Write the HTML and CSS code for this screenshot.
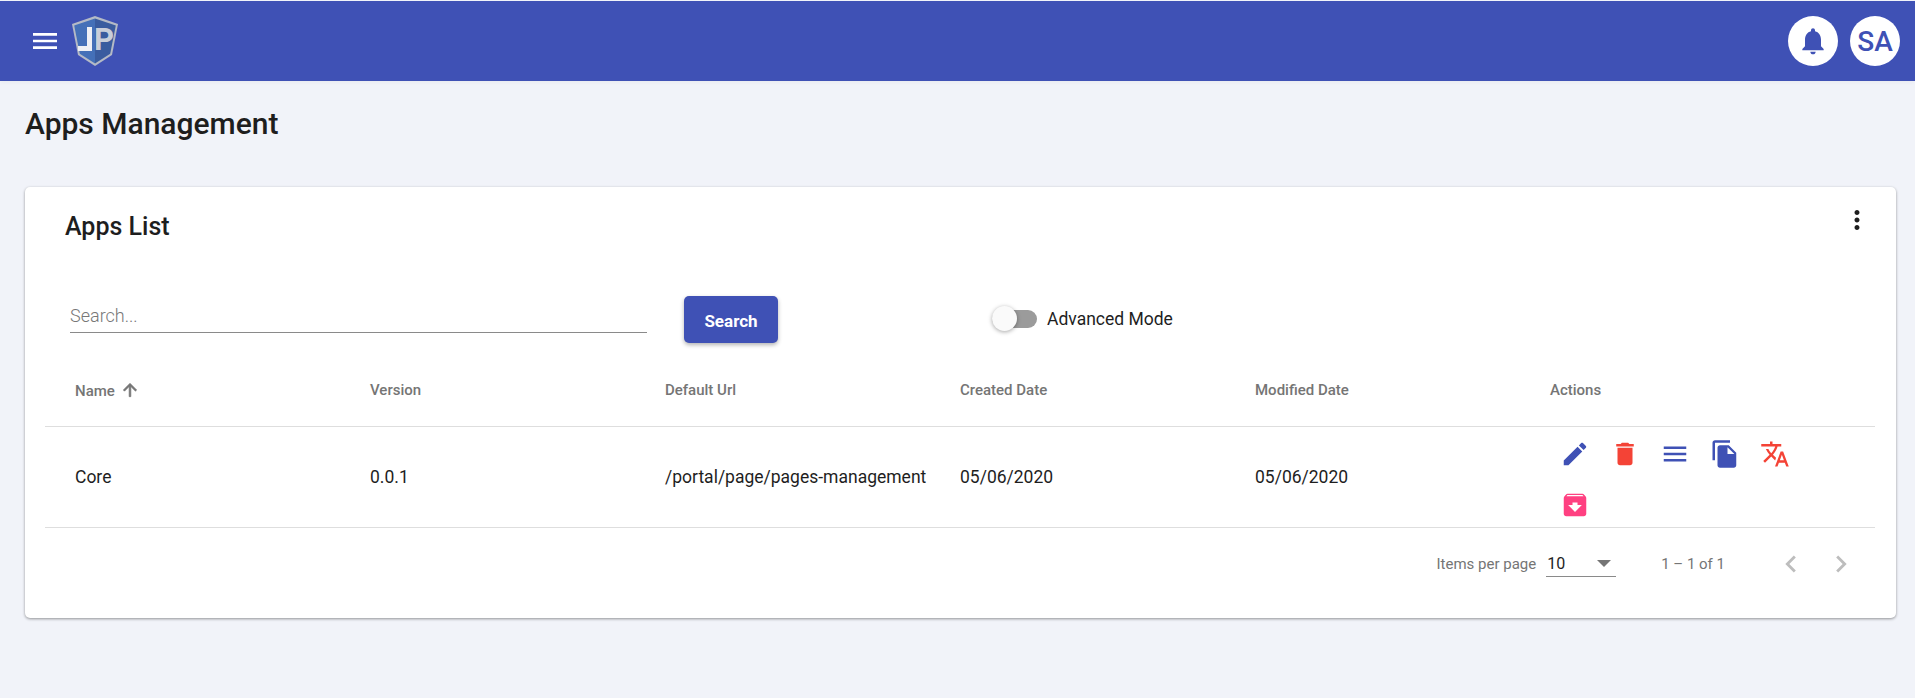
FILE: index.html
```html
<!DOCTYPE html>
<html lang="en">

<head>
    <meta charset="utf-8">
    <meta name="viewport" content="width=device-width, initial-scale=1.0">
    <title>Apps Management</title>
    <link rel="stylesheet" href="styles.css">
</head>

<body>

    <header class="topbar">
        <button class="menu-btn">
            <svg class="icon-32" viewBox="0 0 24 24"><path d="M3 18h18v-2H3v2zm0-5h18v-2H3v2zm0-7v2h18V6H3z" /></svg>
        </button>
        <svg class="logo" viewBox="0 0 48 50">
            <path d="M24 0 47 8 41 39 24 50 7 39 1 8z" fill="#b4bac6" />
            <path d="M24 2.5 24 47.5 8.8 37.8 3.2 9.4z" fill="#4470b8" />
            <path d="M24 2.5 44.8 9.4 39.2 37.8 24 47.5z" fill="#3a5c9f" />
            <path d="M16 11h5v24H7v-5h9z" fill="#eef0f5" />
            <text class="logo-letter" x="23" y="34">P</text>
        </svg>
        <div class="topbar-right">
            <div class="round-btn">
                <svg class="icon-32" viewBox="0 0 24 24"><path d="M12 22c1.1 0 2-.9 2-2h-4c0 1.1.89 2 2 2zm6-6v-5c0-3.07-1.64-5.64-4.5-6.32V4c0-.83-.67-1.5-1.5-1.5s-1.5.67-1.5 1.5v.68C7.63 5.36 6 7.92 6 11v5l-2 2v1h16v-1l-2-2z" /></svg>
            </div>
            <div class="round-btn">SA</div>
        </div>
    </header>

    <main>
        <h1>Apps Management</h1>

        <section class="card">
            <div class="card-head">
                <h2>Apps List</h2>
                <svg class="more" viewBox="0 0 24 24"><path d="M12 8c1.1 0 2-.9 2-2s-.9-2-2-2-2 .9-2 2 .9 2 2 2zm0 2c-1.1 0-2 .9-2 2s.9 2 2 2 2-.9 2-2-.9-2-2-2zm0 6c-1.1 0-2 .9-2 2s.9 2 2 2 2-.9 2-2-.9-2-2-2z" /></svg>
            </div>

            <div class="tools">
                <div class="search-field">Search...</div>
                <button class="search-btn">Search</button>
                <div class="toggle">
                    <div class="toggle-track"><div class="toggle-thumb"></div></div>
                    <span>Advanced Mode</span>
                </div>
            </div>

            <table>
                <thead>
                    <tr>
                        <th>Name <svg class="sort" viewBox="0 0 24 24"><path d="M4 12l1.41 1.41L11 7.83V20h2V7.83l5.58 5.59L20 12l-8-8-8 8z" /></svg></th>
                        <th>Version</th>
                        <th>Default Url</th>
                        <th>Created Date</th>
                        <th>Modified Date</th>
                        <th>Actions</th>
                    </tr>
                </thead>
                <tbody>
                    <tr>
                        <td>Core</td>
                        <td>0.0.1</td>
                        <td>/portal/page/pages-management</td>
                        <td>05/06/2020</td>
                        <td>05/06/2020</td>
                        <td>
                            <div class="actions">
                                <span class="act blue"><svg viewBox="0 0 24 24"><path d="M3 17.25V21h3.75L17.81 9.94l-3.75-3.75L3 17.25zM20.71 7.04c.39-.39.39-1.02 0-1.41l-2.34-2.34c-.39-.39-1.02-.39-1.41 0l-1.83 1.83 3.75 3.75 1.83-1.83z" /></svg></span>
                                <span class="act red"><svg viewBox="0 0 24 24"><path d="M6 19c0 1.1.9 2 2 2h8c1.1 0 2-.9 2-2V7H6v12zM19 4h-3.5l-1-1h-5l-1 1H5v2h14V4z" /></svg></span>
                                <span class="act blue"><svg viewBox="0 0 24 24"><path d="M3 18h18v-2H3v2zm0-5h18v-2H3v2zm0-7v2h18V6H3z" /></svg></span>
                                <span class="act blue"><svg viewBox="0 0 24 24"><path d="M16 1H4c-1.1 0-2 .9-2 2v14h2V3h12V1zm-1 4l6 6v10c0 1.1-.9 2-2 2H7.99C6.89 23 6 22.1 6 21l.01-14c0-1.1.89-2 1.99-2h7zm-1 7h5.5L14 6.5V12z" /></svg></span>
                                <span class="act red"><svg viewBox="0 0 24 24"><path d="M12.87 15.07l-2.54-2.51.03-.03c1.74-1.94 2.98-4.17 3.71-6.53H17V4h-7V2H8v2H1v1.99h11.17C11.5 7.92 10.44 9.75 9 11.35 8.07 10.32 7.3 9.19 6.69 8h-2c.73 1.63 1.73 3.17 2.98 4.56l-5.09 5.02L4 19l5-5 3.11 3.11.76-2.04zM18.5 10h-2L12 22h2l1.12-3h4.75L21 22h2l-4.5-12zm-2.62 7l1.62-4.33L19.12 17h-3.24z" /></svg></span>
                                <span class="act pink"><svg viewBox="0 0 24 24"><path d="M20.54 5.23l-1.39-1.68C18.88 3.21 18.47 3 18 3H6c-.47 0-.88.21-1.16.55L3.46 5.23C3.17 5.57 3 6.02 3 6.5V19c0 1.1.9 2 2 2h14c1.1 0 2-.9 2-2V6.5c0-.48-.17-.93-.46-1.27zM12 17.5L6.5 12H10v-2h4v2h3.5L12 17.5zM5.12 5l.81-1h12l.94 1H5.12z" /></svg></span>
                            </div>
                        </td>
                    </tr>
                </tbody>
            </table>

            <div class="pager">
                <span class="pager-label">Items per page</span>
                <div class="pager-select">
                    <span>10</span>
                    <i class="caret"></i>
                </div>
                <span class="pager-range">1 – 1 of 1</span>
                <svg class="chev" viewBox="0 0 24 24"><path d="M15.41 7.41L14 6l-6 6 6 6 1.41-1.41L10.83 12z" /></svg>
                <svg class="chev" viewBox="0 0 24 24"><path d="M10 6L8.59 7.41 13.17 12l-4.58 4.59L10 18l6-6z" /></svg>
            </div>
        </section>
    </main>

</body>

</html>
```

FILE: styles.css
```css
* {
    box-sizing: border-box;
}

body {
    margin: 0;
    padding-top: 1px;
    height: 698px;
    overflow: hidden;
    background-color: #f1f3f9;
    font-family: Roboto, sans-serif;
    color: #1e1e1e;
}

/* TOPBAR */
.topbar {
    display: flex;
    align-items: center;
    height: 80px;
    padding: 0 15px 0 25px;
    background-color: #3f51b5;
    box-shadow: 0 2px 4px rgba(0, 0, 0, 0.03);
}

.menu-btn {
    display: flex;
    align-items: center;
    justify-content: center;
    width: 40px;
    height: 40px;
    padding: 0;
    border: 0;
    background: none;
    fill: white;
}

.icon-32 {
    width: 32px;
    height: 32px;
}

.logo {
    width: 48px;
    height: 50px;
    margin-left: 6px;
}

.logo-letter {
    font-family: Roboto, sans-serif;
    font-size: 31px;
    font-weight: 700;
    fill: #c9ced9;
}

.topbar-right {
    display: flex;
    gap: 12px;
    margin-left: auto;
}

.round-btn {
    display: flex;
    align-items: center;
    justify-content: center;
    width: 50px;
    height: 50px;
    border-radius: 50%;
    background-color: white;
    color: #3f51b5;
    fill: #3f51b5;
    font-size: 28px;
    font-weight: 500;
}

/* PAGE */
main {
    padding: 0 19px 0 25px;
}

h1 {
    margin: 0;
    padding-top: 26px;
    height: 106px;
    font-size: 30px;
    line-height: 34px;
    font-weight: 500;
}

.card {
    height: 431px;
    padding: 0 20px;
    background-color: white;
    border-radius: 5px;
    box-shadow: 0 1px 3px rgba(0, 0, 0, 0.4);
}

.card-head {
    display: flex;
    justify-content: space-between;
    height: 109px;
    padding: 25px 4px 0 20px;
}

h2 {
    margin: 0;
    font-size: 25px;
    line-height: 30px;
    font-weight: 500;
}

.more {
    width: 30px;
    height: 30px;
    margin-top: -7px;
    fill: #1e1e1e;
}

/* SEARCH ROW */
.tools {
    display: flex;
    align-items: flex-start;
    height: 58px;
    padding-left: 25px;
}

.search-field {
    width: 577px;
    height: 37px;
    padding-top: 9px;
    border-bottom: 1px solid #8a8a8a;
    color: #777;
    font-size: 18px;
    font-weight: 300;
}

.search-btn {
    flex: none;
    width: 94px;
    height: 47px;
    margin-left: 37px;
    padding-top: 3px;
    border: 0;
    border-radius: 5px;
    background-color: #3f51b5;
    color: white;
    font-family: Roboto, sans-serif;
    font-size: 17px;
    font-weight: 700;
    box-shadow: 0 2px 4px rgba(0, 0, 0, 0.3);
}

.toggle {
    display: flex;
    align-items: center;
    gap: 10px;
    margin: 13px 0 0 214px;
    font-size: 17.5px;
}

.toggle-track {
    position: relative;
    width: 45px;
    height: 18px;
    border-radius: 9px;
    background-color: #9b9b9b;
}

.toggle-thumb {
    position: absolute;
    top: -4px;
    left: 0;
    width: 25px;
    height: 25px;
    border-radius: 50%;
    background-color: #fafafa;
    box-shadow: 0 1px 4px rgba(0, 0, 0, 0.35);
}

/* TABLE */
table {
    width: 1830px;
    border-collapse: collapse;
    table-layout: fixed;
}

th,
td {
    width: 295px;
    padding: 0 0 0 30px;
    border-bottom: 1px solid #dedede;
    text-align: left;
    white-space: nowrap;
}

th:last-child,
td:last-child {
    width: 355px;
}

th {
    height: 72px;
    color: #757575;
    font-size: 15px;
    font-weight: 500;
}

td {
    height: 101px;
    font-size: 17.5px;
}

.sort {
    width: 20px;
    height: 20px;
    margin-left: 1px;
    vertical-align: -4px;
    fill: #757575;
    stroke: #757575;
    stroke-width: 0.8;
}

.actions {
    display: flex;
    flex-wrap: wrap;
    align-content: flex-start;
    width: 260px;
    height: 100px;
    padding-top: 2px;
}

.act {
    display: flex;
    align-items: center;
    justify-content: center;
    width: 50px;
    height: 51px;
}

.act svg {
    width: 30px;
    height: 30px;
}

.blue {
    fill: #3f51b5;
}

.red {
    fill: #f44336;
}

.pink {
    fill: #ff4081;
}

/* PAGER */
.pager {
    display: flex;
    align-items: center;
    justify-content: flex-end;
    height: 72px;
    padding-right: 10px;
    color: #757575;
    font-size: 15px;
}

.pager-select {
    display: flex;
    align-items: center;
    justify-content: space-between;
    width: 70px;
    height: 27px;
    margin-left: 10px;
    padding: 0 5px 0 1px;
    border-bottom: 1px solid #8a8a8a;
    color: #1e1e1e;
    font-size: 16px;
}

.caret {
    width: 0;
    height: 0;
    border-left: 7px solid transparent;
    border-right: 7px solid transparent;
    border-top: 7px solid #757575;
}

.pager-range {
    margin: 0 41px 0 45px;
}

.chev {
    width: 34px;
    height: 34px;
    margin: 0 8px;
    fill: #bdbdbd;
}
```
